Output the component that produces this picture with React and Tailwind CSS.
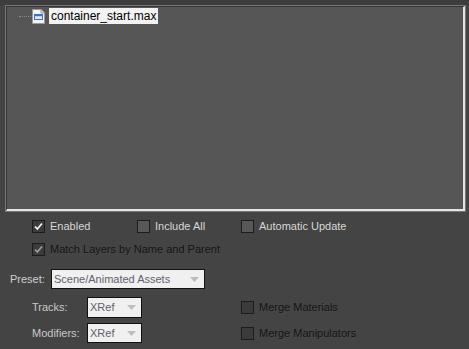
import React from "react";

function Check({ checked, disabled, light }) {
  return (
    <span
      className={`flex h-[13px] w-[13px] shrink-0 items-center justify-center border border-[#1c1c1c] ${
        light ? "bg-[#585858]" : "bg-[#3b3b3b]"
      }`}
    >
      {checked && (
        <svg width="11" height="11" viewBox="0 0 11 11">
          <path
            d="M2 5.5 L4.3 8 L9 2.5"
            fill="none"
            stroke={disabled ? "#9a9a9a" : "#f2f2f2"}
            strokeWidth="1.8"
          />
        </svg>
      )}
    </span>
  );
}

function CheckItem({ label, checked, disabled, light, className = "" }) {
  return (
    <div className={`flex h-[13px] items-center gap-[5px] ${className}`}>
      <Check checked={checked} disabled={disabled} light={light} />
      <span
        className={
          disabled
            ? "text-[#141414] [text-shadow:1px_1px_0_#4a4a4a]"
            : "text-[#d6d6d6]"
        }
      >
        {label}
      </span>
    </div>
  );
}

function Dropdown({ value, width, height = "h-[21px]" }) {
  return (
    <div
      className={`flex items-center justify-between border border-[#111] bg-[#f0f0f0] pl-[2px] pr-[5px] text-[#5f5f6e] ${width} ${height}`}
    >
      <span className="text-[11px]">{value}</span>
      <svg width="9" height="5" viewBox="0 0 9 5">
        <path d="M0 0 H9 L4.5 5 Z" fill="#bdbdbd" />
      </svg>
    </div>
  );
}

export default function App() {
  return (
    <div
      className="h-[349px] w-[469px] overflow-hidden bg-[#444] text-[11px] leading-[13px]"
      style={{ fontFamily: '"Liberation Sans", Arial, sans-serif' }}
    >
      <div className="h-[5px] bg-[#3d3d3d]" />
      {/* tree panel */}
      <div className="ml-[5px] mr-[3px] flex h-[207px] border border-[#777]">
        <div className="flex-1 border-l border-t border-[#353535] border-b-[#e4e4e4] border-r-[#e4e4e4] border-b-2 border-r-2 bg-[#565656]">
          <div className="flex items-center pl-[12px] pt-[1px]">
            <div className="mt-[1px] w-[12px] border-t border-dotted border-[#8a8a8a]" />
            <svg width="13" height="15" viewBox="0 0 13 15" className="ml-[1px] mt-[1px]">
              <path d="M0.5 0.5 H9 L12.5 4 V14.5 H0.5 Z" fill="#f4f4f4" stroke="#9a9a9a" />
              <path d="M9 0.5 V4 H12.5" fill="#ddd" stroke="#9a9a9a" />
              <rect x="2.5" y="5.5" width="8" height="5" fill="#dfe8f4" stroke="#3f6fc0" />
              <rect x="3" y="6" width="7" height="1.2" fill="#3f6fc0" />
            </svg>
            <div className="ml-[4px] flex h-[16px] items-center bg-[#f2f2f2] px-[2px] text-[12px] text-black">
              container_start.max
            </div>
          </div>
        </div>
      </div>

      {/* options */}
      <div className="mt-[8px] flex pl-[32px]">
        <CheckItem label="Enabled" checked className="w-[105px]" />
        <CheckItem label="Include All" light className="w-[104px]" />
        <CheckItem label="Automatic Update" light />
      </div>
      <div className="mt-[10px] flex pl-[32px]">
        <CheckItem label="Match Layers by Name and Parent" checked disabled />
      </div>

      <div className="mt-[13px] flex items-center pl-[10px]">
        <span className="w-[41px] text-[#cfcfcf]">Preset:</span>
        <Dropdown value="Scene/Animated Assets" width="w-[154px]" height="h-[20px]" />
      </div>

      <div className="mt-[8px] flex pl-[32px]">
        <div className="flex w-[209px] flex-col gap-[5px]">
          <div className="flex items-center">
            <span className="w-[55px] text-[#c8c8c8]">Tracks:</span>
            <Dropdown value="XRef" width="w-[55px]" />
          </div>
          <div className="flex items-center">
            <span className="w-[55px] text-[#c8c8c8]">Modifiers:</span>
            <Dropdown value="XRef" width="w-[55px]" height="h-[20px]" />
          </div>
        </div>
        <div className="flex flex-col gap-[13px] pt-[4px]">
          <CheckItem label="Merge Materials" disabled />
          <CheckItem label="Merge Manipulators" disabled />
        </div>
      </div>
    </div>
  );
}
